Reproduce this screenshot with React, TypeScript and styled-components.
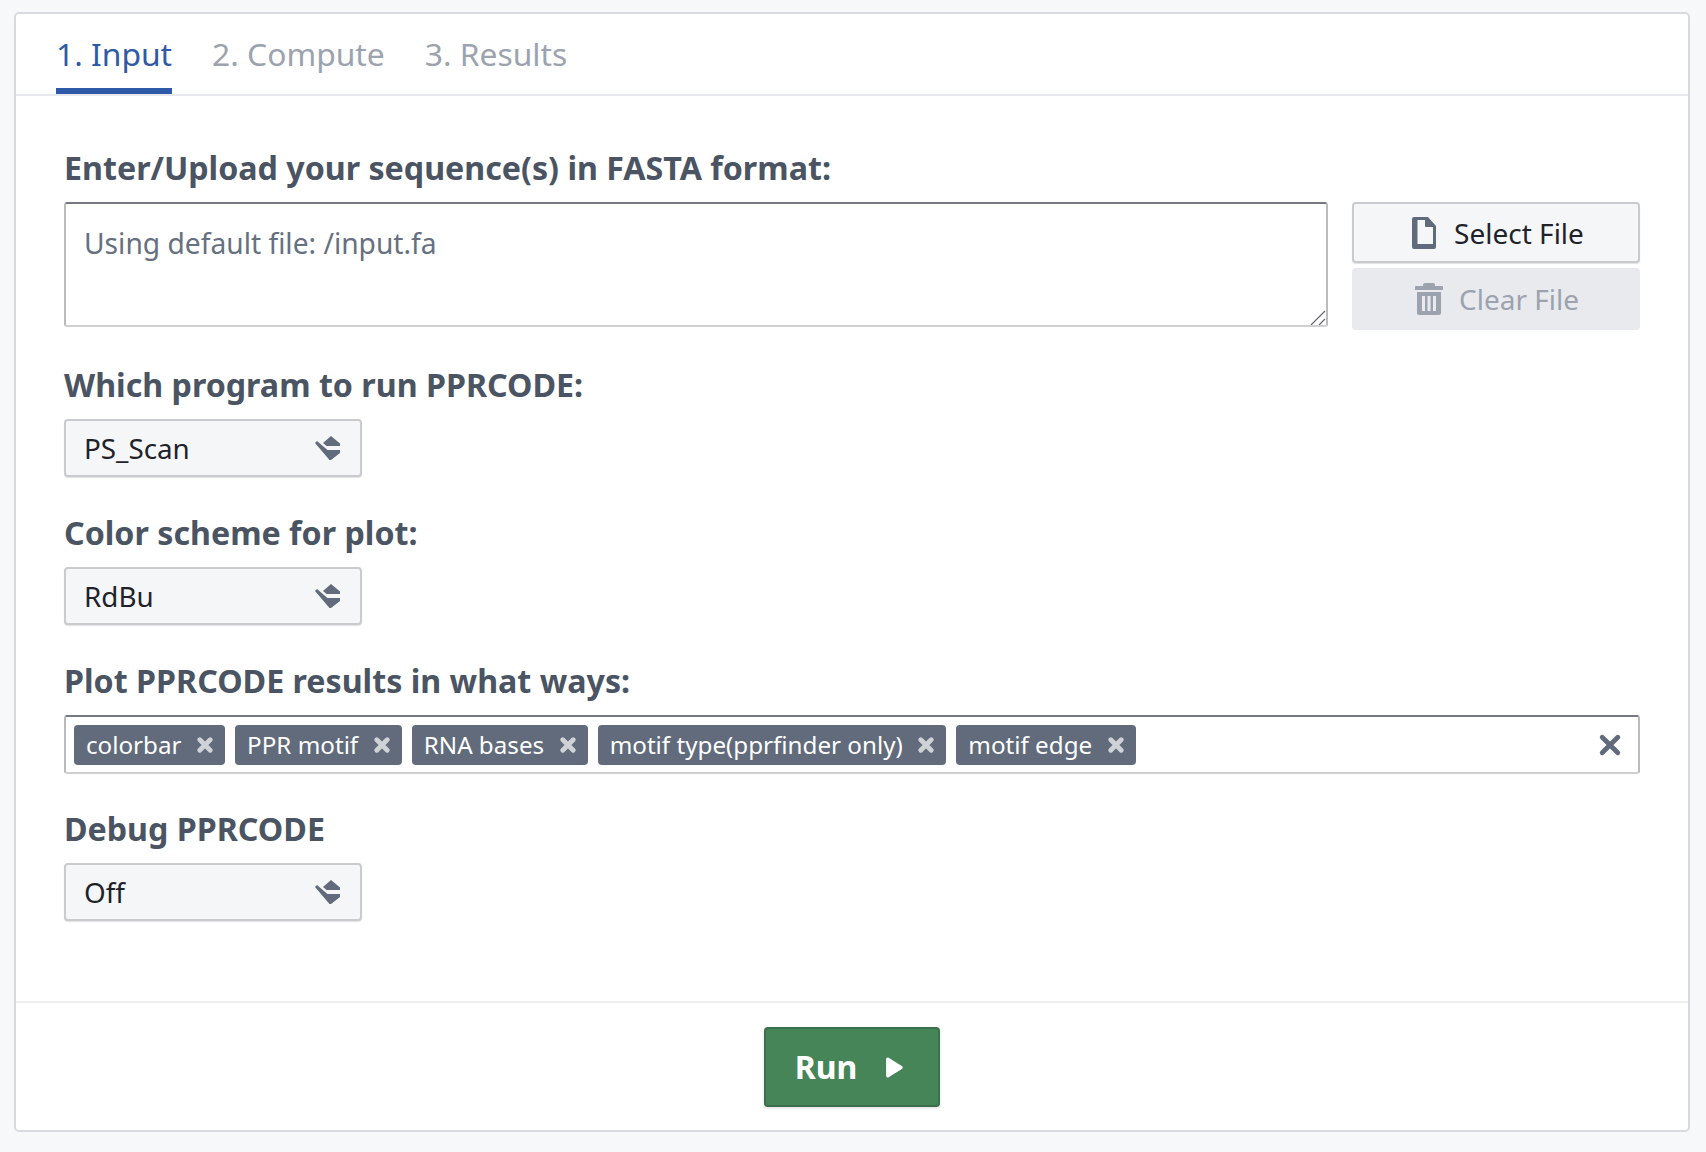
import React from "react";
import styled, { createGlobalStyle } from "styled-components";

const Global = createGlobalStyle`
  html, body { margin: 0; padding: 0; background: #f7f8fa; }
  body { font-family: "Noto Sans", "Open Sans", sans-serif; min-height: 1152px; overflow: hidden; }
  #root { height: 1152px; padding-top: 12px; }
  * { box-sizing: border-box; }
`;

const Card = styled.main`
  margin: 0 16px 0 14px;
  width: 1676px;
  height: 1120px;
  background: #fff;
  border: 2px solid #d9dadd;
  border-radius: 5px;
  display: flex;
  flex-direction: column;
`;

const Tabs = styled.nav`
  height: 82px;
  flex: none;
  display: flex;
  gap: 40px;
  padding-left: 40px;
  border-bottom: 2px solid #e8e9ec;
`;

const Tab = styled.div<{ $active?: boolean }>`
  height: 80px;
  font-size: 31.8px;
  line-height: 79px;
  color: ${(p) => (p.$active ? "#2f5aa8" : "#9ca3af")};
  border-bottom: 6px solid ${(p) => (p.$active ? "#2f5aa8" : "transparent")};
`;

const Form = styled.section`
  flex: 1;
  padding: 51px 48px 0 48px;
  display: flex;
  flex-direction: column;
  gap: 35px;
`;

const Field = styled.div`
  display: flex;
  flex-direction: column;
  gap: 14px;
`;

const Label = styled.label`
  font-size: 32.2px;
  line-height: 41px;
  font-weight: 700;
  color: #4a5462;
`;

const FileRow = styled.div`
  display: flex;
  gap: 24px;
  align-items: flex-start;
  margin-bottom: -1px;
`;

const AreaWrap = styled.div`
  position: relative;
  flex: 1;
  height: 125px;
  display: flex;
`;

const TextArea = styled.textarea`
  flex: 1;
  resize: none;
  font: inherit;
  font-size: 28.2px;
  line-height: 40px;
  padding: 19px 18px;
  color: #111;
  background: #fff;
  border: 2px solid #b9bbbf;
  border-top-color: #76797f;
  border-bottom-color: #cfd0d3;
  border-radius: 3px;
  outline: none;
  &::placeholder { color: #667080; opacity: 1; }
`;

const Grip = styled.svg`
  position: absolute;
  right: 2px;
  bottom: 2px;
`;

const FileButtons = styled.div`
  width: 288px;
  display: flex;
  flex-direction: column;
  gap: 5px;
`;

const FileButton = styled.button<{ $disabled?: boolean }>`
  height: ${(p) => (p.$disabled ? "62px" : "61px")};
  display: flex;
  align-items: center;
  justify-content: center;
  gap: ${(p) => (p.$disabled ? "16px" : "18px")};
  font: inherit;
  font-size: 28px;
  color: ${(p) => (p.$disabled ? "#9ca3af" : "#1f2329")};
  background: ${(p) => (p.$disabled ? "#e9eaee" : "#f5f6f8")};
  border: ${(p) => (p.$disabled ? "none" : "2px solid #c9cbcf")};
  border-radius: 4px;
  box-shadow: ${(p) => (p.$disabled ? "none" : "0 1px 1px rgba(0,0,0,.12)")};
  padding: 0 0 0 ${(p) => (p.$disabled ? "2px" : "4px")};
`;

const Select = styled.div`
  width: 298px;
  height: 58px;
  display: flex;
  align-items: center;
  justify-content: space-between;
  padding: 0 20px 0 18px;
  font-size: 27.8px;
  color: #1f2329;
  background: #f5f6f8;
  border: 2px solid #c9cbcf;
  border-radius: 4px;
  box-shadow: 0 1px 1px rgba(0,0,0,.12);
`;

const TagBox = styled.div`
  height: 59px;
  margin-bottom: -1px;
  display: flex;
  align-items: center;
  gap: 10px;
  padding: 0 16px 0 8px;
  background: #fff;
  border: 2px solid #b9bbbf;
  border-top-color: #76797f;
  border-bottom-color: #cfd0d3;
  border-radius: 3px;
`;

const Tag = styled.span`
  height: 40px;
  display: flex;
  align-items: center;
  justify-content: space-between;
  gap: 15.5px;
  padding: 0 12px;
  font-size: 24.2px;
  color: #fff;
  background: #616b7b;
  border-radius: 4px;
  white-space: nowrap;
`;

const ClearAll = styled.span`
  margin-left: auto;
  display: flex;
`;

const Footer = styled.footer`
  height: 129px;
  flex: none;
  display: flex;
  justify-content: center;
  padding-top: 24px;
  border-top: 2px solid #ededef;
`;

const RunButton = styled.button`
  width: 176px;
  height: 80px;
  display: flex;
  align-items: center;
  justify-content: center;
  gap: 29px;
  font: inherit;
  font-size: 32px;
  font-weight: 700;
  color: #fff;
  background: #458558;
  border: 2px solid #3c6f4c;
  border-radius: 4px;
  box-shadow: 0 1px 3px rgba(0,0,0,.15);
  padding: 0 6px 2px 0;
`;

const PlayGlyph = styled.svg`
  margin-top: 2px;
`;

const SelectIcon = () => (
  <svg width="25" height="24" viewBox="0 0 25 24" fill="#616b7b">
    <path d="M8 7 16 0l9 7.500V10H11.500z" />
    <path d="M0 7l2-2 10.500 9H25v3l-9 7h-1.500z" />
  </svg>
);

const FileIcon = () => (
  <svg width="24" height="32" viewBox="0 0 24 32">
    <path
      fillRule="evenodd"
      fill="#5f6b7a"
      d="M2 0h14l8 9v21a2 2 0 0 1-2 2H2a2 2 0 0 1-2-2V2a2 2 0 0 1 2-2zM5.500 3v24H21V10h-7a1 1 0 0 1-1-1V3z"
    />
  </svg>
);

const TrashIcon = () => (
  <svg width="28" height="32" viewBox="0 0 28 32" fill="#9ca3af">
    <path d="M10 0h8a2 2 0 0 1 2 2v1h7a1 1 0 0 1 1 1v3H0V4a1 1 0 0 1 1-1h7V2a2 2 0 0 1 2-2z" />
    <path
      fillRule="evenodd"
      d="M2 9h24v21a2 2 0 0 1-2 2H4a2 2 0 0 1-2-2zM7 13v15h3V13zM12.500 13v15h3V13zM18 13v15h3V13z"
    />
  </svg>
);

const CloseIcon = ({ size, color, width }: { size: number; color: string; width: number }) => (
  <svg width={size} height={size} viewBox="0 0 20 20" fill="none" stroke={color} strokeWidth={width} strokeLinecap="round">
    <path d="M3.500 3.500l13 13M16.500 3.500l-13 13" />
  </svg>
);

const PlayIcon = () => (
  <PlayGlyph width="17" height="21" viewBox="0 0 16 20" fill="#fff">
    <path d="M0 2a1.500 1.500 0 0 1 2.400-1.200l12.600 7.800a1.600 1.600 0 0 1 0 2.800L2.400 19.200A1.500 1.500 0 0 1 0 18z" />
  </PlayGlyph>
);

const tags = ["colorbar", "PPR motif", "RNA bases", "motif type(pprfinder only)", "motif edge"];

export default function App() {
  return (
    <>
      <Global />
      <Card>
        <Tabs>
          <Tab $active>1. Input</Tab>
          <Tab>2. Compute</Tab>
          <Tab>3. Results</Tab>
        </Tabs>
        <Form>
          <Field>
            <Label>Enter/Upload your sequence(s) in FASTA format:</Label>
            <FileRow>
              <AreaWrap>
                <TextArea placeholder="Using default file: /input.fa" />
                <Grip width="16" height="15" viewBox="0 0 16 15" fill="none" stroke="#666b72" strokeWidth="1.300">
                  <path d="M1 15L15 1M9 15l6-6" />
                </Grip>
              </AreaWrap>
              <FileButtons>
                <FileButton>
                  <FileIcon />
                  Select File
                </FileButton>
                <FileButton $disabled>
                  <TrashIcon />
                  Clear File
                </FileButton>
              </FileButtons>
            </FileRow>
          </Field>
          <Field>
            <Label>Which program to run PPRCODE:</Label>
            <Select>
              PS_Scan
              <SelectIcon />
            </Select>
          </Field>
          <Field>
            <Label>Color scheme for plot:</Label>
            <Select>
              RdBu
              <SelectIcon />
            </Select>
          </Field>
          <Field>
            <Label>Plot PPRCODE results in what ways:</Label>
            <TagBox>
              {tags.map((t) => (
                <Tag key={t}>
                  {t}
                  <CloseIcon size={16} color="#cfd2d6" width={6} />
                </Tag>
              ))}
              <ClearAll>
                <CloseIcon size={24} color="#616b7b" width={4} />
              </ClearAll>
            </TagBox>
          </Field>
          <Field>
            <Label>Debug PPRCODE</Label>
            <Select>
              Off
              <SelectIcon />
            </Select>
          </Field>
        </Form>
        <Footer>
          <RunButton>
            Run
            <PlayIcon />
          </RunButton>
        </Footer>
      </Card>
    </>
  );
}
